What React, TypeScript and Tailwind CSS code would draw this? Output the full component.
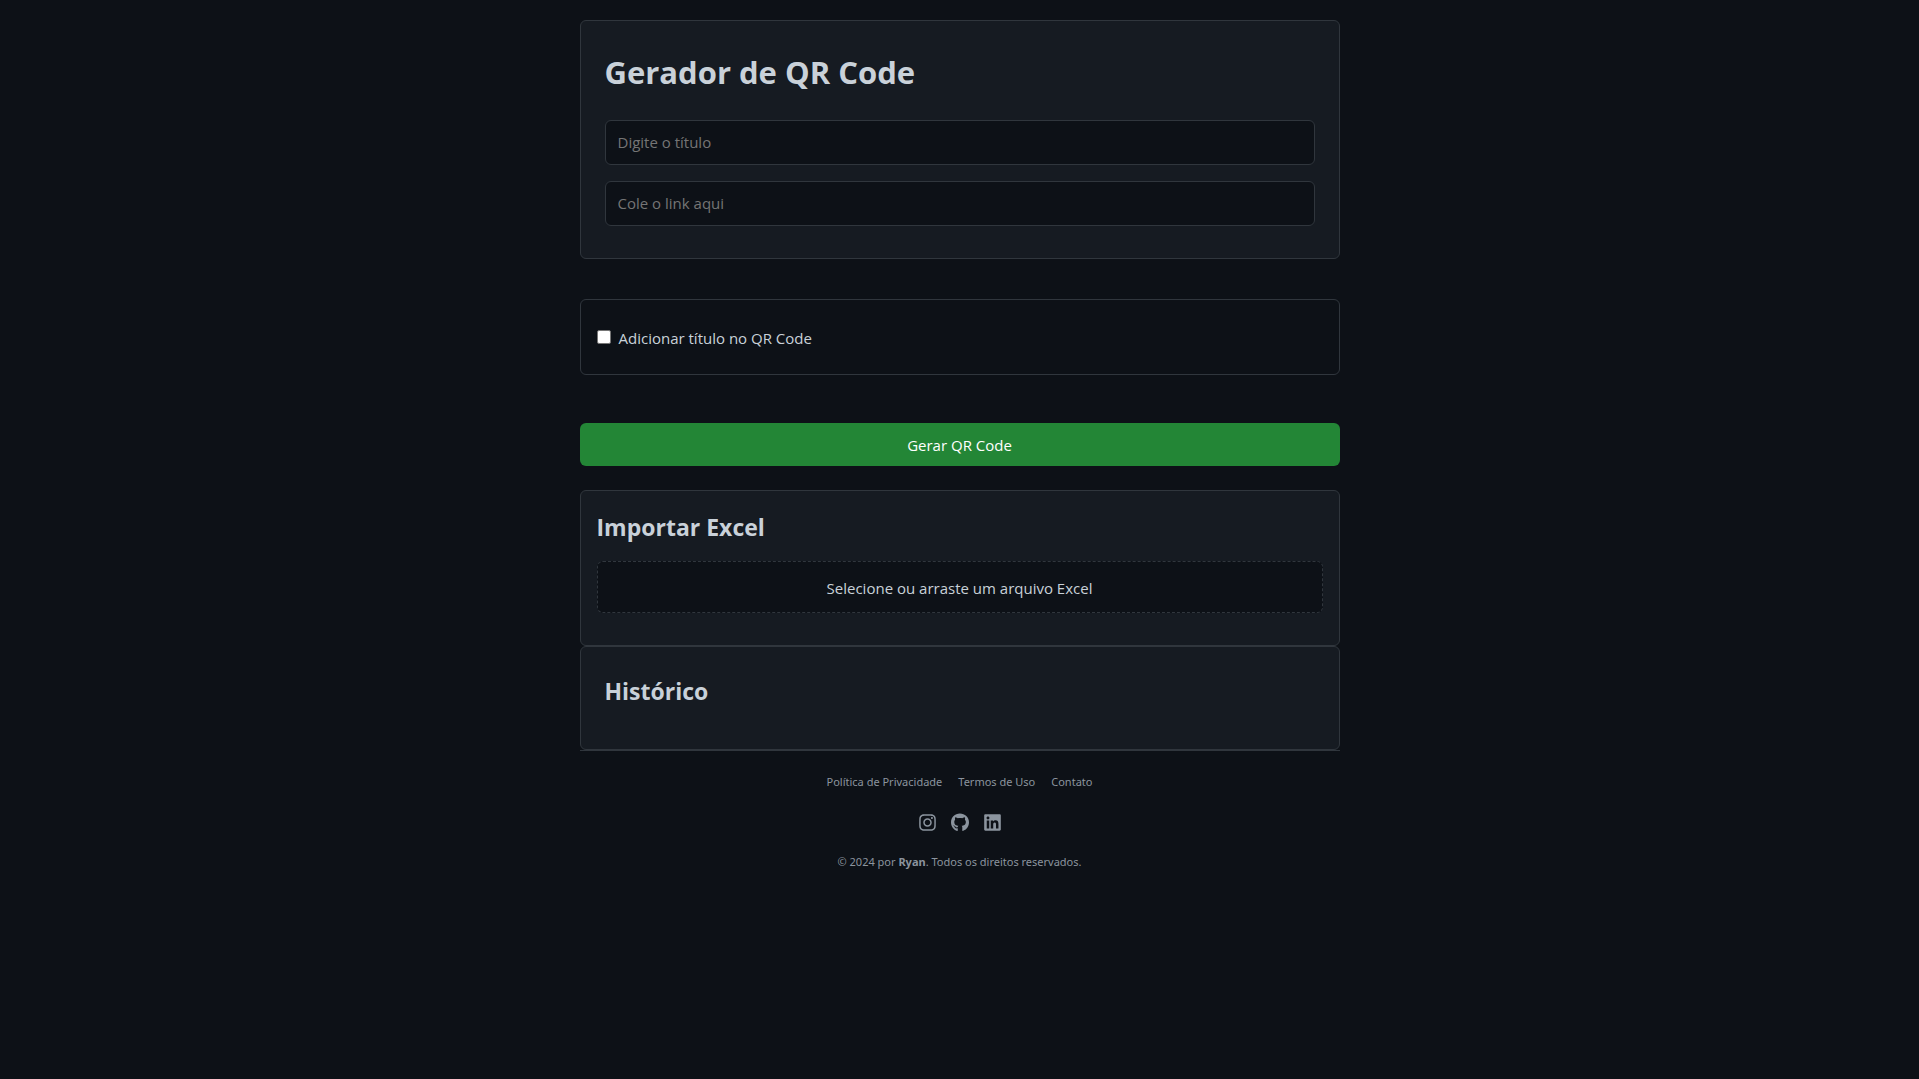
import { FaGithub, FaInstagram, FaLinkedin } from "react-icons/fa";

const socials = [
  { label: "Instagram", Icon: FaInstagram, width: "w-[17px]" },
  { label: "GitHub", Icon: FaGithub, width: "w-[18px]" },
  { label: "LinkedIn", Icon: FaLinkedin, width: "w-[17px]" },
];

const fieldClass =
  "block h-[45px] w-full rounded-md border border-[#30363d] bg-[#0d1117] px-3 pb-0.5 text-[15px] text-[#c9d1d9] placeholder:text-[#757575]";

export default function App() {
  return (
    <div className="min-h-screen bg-[#0d1117] px-5 pt-5 font-['Open_Sans','Noto_Sans',sans-serif] text-[15px] leading-6 text-[#c9d1d9]">
      <div className="mx-auto max-w-[760px]">
        <main>
          <section className="rounded-md border border-[#30363d] bg-[#161b22] px-6 pt-7 pb-8">
            <h1 className="mb-6 text-[31px] leading-[47px] font-bold">Gerador de QR Code</h1>
            <div className="flex flex-col gap-4">
              <input type="text" aria-label="Título" placeholder="Digite o título" className={fieldClass} />
              <input type="url" aria-label="Link" placeholder="Cole o link aqui" className={fieldClass} />
            </div>
          </section>

          <section className="mt-10 flex h-[76px] items-center rounded-md border border-[#30363d] px-4 pt-0.5">
            <label className="flex items-center gap-2">
              <input
                type="checkbox"
                className="mb-0.5 size-[14px] appearance-none rounded-[2px] border border-[#767676] bg-white checked:bg-[#238636]"
              />
              Adicionar título no QR Code
            </label>
          </section>

          <button type="button" className="mt-12 block h-[43px] w-full rounded-md bg-[#238636] text-white">
            Gerar QR Code
          </button>

          <section className="mt-6 rounded-md border border-[#30363d] bg-[#161b22] px-4 pt-4 pb-8">
            <h2 className="mb-3.5 text-[23px] leading-10 font-bold">Importar Excel</h2>
            <button
              type="button"
              className="block h-[52px] w-full rounded-md border border-dashed border-[#30363d] bg-[#0d1117] pt-0.5"
            >
              Selecione ou arraste um arquivo Excel
            </button>
          </section>

          <section className="rounded-md border border-[#30363d] bg-[#161b22] px-6 pt-6 pb-[38px]">
            <h2 className="text-[23px] leading-10 font-bold">Histórico</h2>
          </section>
        </main>

        <footer className="flex flex-col items-center border-t border-[#30363d] pt-[21px] font-['Noto_Sans','Open_Sans',sans-serif] text-[11px] leading-5 text-[#8b949e]">
          <nav className="flex gap-4">
            <a href="#privacidade">Política de Privacidade</a>
            <a href="#termos">Termos de Uso</a>
            <a href="#contato">Contato</a>
          </nav>
          <div className="my-5 flex h-5 items-center gap-[15px]">
            {socials.map(({ label, Icon, width }) => (
              <a key={label} href={`#${label.toLowerCase()}`} aria-label={label}>
                <Icon className={`h-[19px] ${width}`} />
              </a>
            ))}
          </div>
          <p>
            © 2024 por <strong>Ryan</strong>. Todos os direitos reservados.
          </p>
        </footer>
      </div>
    </div>
  );
}
